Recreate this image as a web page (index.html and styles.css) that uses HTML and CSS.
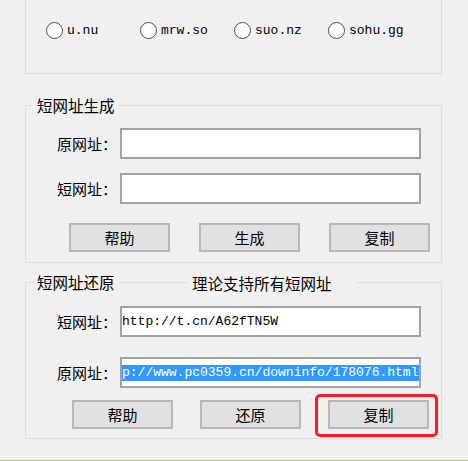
FILE: index.html
```html
<!DOCTYPE html>
<html lang="zh-CN">
<head>
<meta charset="utf-8">
<title>短网址</title>
<link rel="stylesheet" href="styles.css">
</head>
<body>
<div class="window">
  <div class="group group-top">
    <label class="radio"><span class="circle"></span><span class="rtext">u.nu</span></label>
    <label class="radio"><span class="circle"></span><span class="rtext">mrw.so</span></label>
    <label class="radio"><span class="circle"></span><span class="rtext">suo.nz</span></label>
    <label class="radio"><span class="circle"></span><span class="rtext">sohu.gg</span></label>
  </div>

  <div class="group group-gen">
    <span class="legend">短网址生成</span>
    <div class="row">
      <span class="label">原网址：</span>
      <div class="field"></div>
    </div>
    <div class="row row-second">
      <span class="label">短网址：</span>
      <div class="field"></div>
    </div>
    <div class="buttons buttons-gen">
      <div class="btn">帮助</div>
      <div class="btn">生成</div>
      <div class="btn">复制</div>
    </div>
  </div>

  <div class="group group-restore">
    <span class="legend">短网址还原</span>
    <span class="legend legend-note">理论支持所有短网址</span>
    <div class="row">
      <span class="label">短网址：</span>
      <div class="field mono">http://t.cn/A62fTN5W</div>
    </div>
    <div class="row row-second-r">
      <span class="label">原网址：</span>
      <div class="field mono"><span class="sel">p://www.pc0359.cn/downinfo/178076.html</span></div>
    </div>
    <div class="buttons buttons-res">
      <div class="btn">帮助</div>
      <div class="btn">还原</div>
      <div class="btn btn-marked">复制<span class="mark"></span></div>
    </div>
  </div>
</div>
</body>
</html>
```

FILE: styles.css
```css
* { box-sizing: border-box; }

html, body {
  margin: 0;
  padding: 0;
  background: #f0f0f0;
}

body {
  font-family: "Noto Sans CJK SC", "Noto Sans", sans-serif;
  color: #000;
  overflow: hidden;
}

.window {
  height: 461px;
  border-bottom: 1px solid #afcb84;
  overflow: hidden;
}

.group {
  position: relative;
  width: 417px;
  margin-left: 25px;
  border: 1px solid #dcdcdc;
}

.group-top {
  margin-top: -20px;
  height: 94px;
  display: flex;
  padding-top: 41px;
  padding-left: 20px;
}

.radio {
  width: 94px;
  height: 17px;
  display: flex;
  align-items: center;
  flex: none;
}

.circle {
  width: 17px;
  height: 17px;
  border-radius: 50%;
  border: 1.5px solid #4a4a4a;
  background: #fff;
  flex: none;
}

.rtext {
  margin-left: 4px;
  font-family: "Liberation Mono", monospace;
  font-size: 13px;
  line-height: 17px;
}

.legend {
  position: absolute;
  top: -11px;
  left: 7px;
  padding: 0 4px;
  background: #f0f0f0;
  font-size: 15.5px;
  line-height: 20px;
}

.legend-note {
  left: 161px;
  padding: 1px 25px 0 5px;
}

.group-gen {
  margin-top: 31px;
  height: 158px;
  padding-top: 22px;
}

.group-restore {
  margin-top: 19px;
  height: 157px;
  padding-top: 23px;
}

.row {
  display: flex;
  align-items: center;
  height: 31px;
}

.row-second { margin-top: 14px; }
.row-second-r { margin-top: 20px; }

.label {
  margin-left: 31px;
  width: 63px;
  font-size: 15px;
  line-height: 20px;
  white-space: nowrap;
}

.field {
  width: 301px;
  height: 31px;
  background: #fff;
  border: 2px solid #a2a2a2;
  display: flex;
  align-items: center;
  overflow: hidden;
  white-space: nowrap;
}

.mono {
  font-family: "Liberation Mono", monospace;
  font-size: 13px;
  padding-left: 0;
}

.sel {
  background: #3399ff;
  color: #fff;
  line-height: 16px;
  padding-right: 1px;
}

.buttons {
  display: flex;
}

.buttons-gen {
  margin-top: 19px;
  margin-left: 43px;
  gap: 29px;
}

.buttons-res {
  margin-top: 12px;
  margin-left: 46px;
  gap: 27px;
}

.btn {
  position: relative;
  width: 101px;
  height: 29px;
  background: #e1e1e1;
  border: 2px solid #b8b8b8;
  display: flex;
  align-items: center;
  justify-content: center;
  font-size: 15px;
}

.mark {
  position: absolute;
  left: -15px;
  top: -8px;
  width: 123px;
  height: 43px;
  border: 3px solid #ff1c1c;
  border-radius: 5px;
}
```
